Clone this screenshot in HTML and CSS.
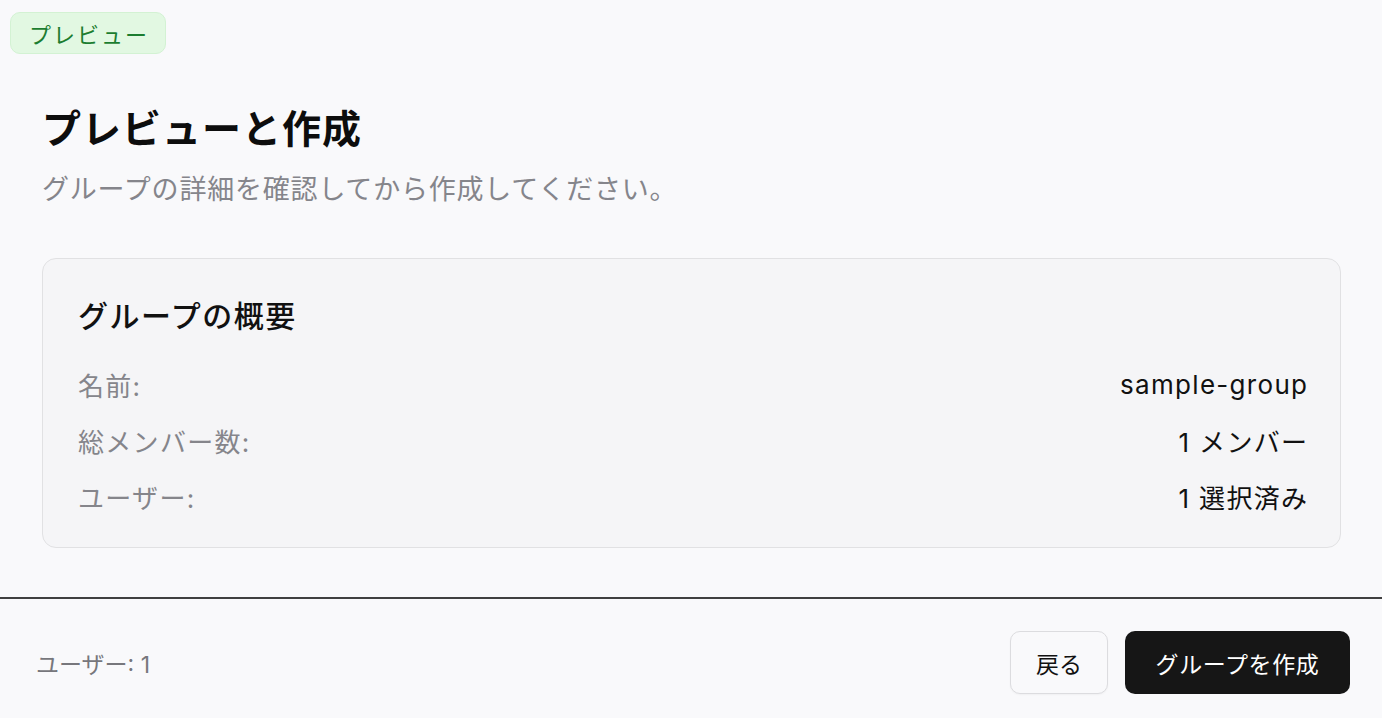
FILE: index.html
```html
<!DOCTYPE html>
<html lang="ja">
<head>
<meta charset="utf-8">
<title>プレビューと作成</title>
<link rel="stylesheet" href="styles.css">
</head>
<body>
<div class="page">
  <div class="content">
    <span class="badge">プレビュー</span>
    <section class="main">
      <h1 class="title">プレビューと作成</h1>
      <p class="subtitle">グループの詳細を確認してから作成してください。</p>
      <div class="card">
        <h2 class="card-title">グループの概要</h2>
        <div class="rows">
          <div class="row"><span class="label">名前:</span><span class="value">sample-group</span></div>
          <div class="row"><span class="label">総メンバー数:</span><span class="value">1 メンバー</span></div>
          <div class="row"><span class="label">ユーザー:</span><span class="value">1 選択済み</span></div>
        </div>
      </div>
    </section>
  </div>
  <footer class="footer">
    <span class="count">ユーザー: 1</span>
    <div class="actions">
      <button class="btn btn-secondary">戻る</button>
      <button class="btn btn-primary">グループを作成</button>
    </div>
  </footer>
</div>
</body>
</html>
```

FILE: styles.css
```css
* { box-sizing: border-box; }
html, body {
  margin: 0;
  padding: 0;
  background: #f9f9fb;
  font-family: "Inter", "Noto Sans CJK JP", sans-serif;
  color: #111;
}
.page {
  width: 1382px;
  height: 718px;
  display: flex;
  flex-direction: column;
  overflow: hidden;
}
.content {
  padding-top: 12px;
  display: flex;
  flex-direction: column;
  align-items: flex-start;
}
.badge {
  margin-left: 10px;
  height: 42px;
  padding: 0 16px 0 18px;
  display: inline-flex;
  align-items: center;
  background: #e2f8e2;
  border: 1px solid #d3f2d3;
  border-radius: 10px;
  color: #1c7d30;
  font-size: 22px;
  letter-spacing: 2px;
}
.main {
  align-self: stretch;
  padding: 0 41px 0 42px;
}
.title {
  margin: 51px 0 0 0;
  font-size: 39px;
  line-height: 48px;
  font-weight: 700;
  color: #0d0d0d;
  letter-spacing: 1px;
}
.subtitle {
  margin: 19px 0 0 0;
  font-size: 27px;
  line-height: 36px;
  color: #85858b;
  letter-spacing: 0.8px;
}
.card {
  margin-top: 50px;
  background: #f5f5f7;
  border: 1px solid #e1e1e3;
  border-radius: 14px;
  padding: 37px 33px 33px 35px;
}
.card-title {
  margin: 0;
  font-size: 30px;
  line-height: 40px;
  font-weight: 500;
  color: #111;
  letter-spacing: 1.5px;
}
.rows {
  margin-top: 30px;
  display: flex;
  flex-direction: column;
  gap: 20px;
}
.row {
  display: flex;
  justify-content: space-between;
  align-items: center;
  height: 36px;
  font-size: 26px;
  letter-spacing: 1.3px;
}
.label { color: #85858b; }
.value { color: #111; margin-right: -1.3px; }
.footer {
  margin-top: 49px;
  border-top: 2px solid #404040;
  padding: 32px 32px 0 36px;
  display: flex;
  justify-content: space-between;
  align-items: center;
}
.count {
  font-size: 23px;
  color: #77777c;
}
.actions {
  display: flex;
  gap: 17px;
  align-items: center;
}
.btn {
  font-family: "Inter", "Noto Sans CJK JP", sans-serif;
  font-size: 23px;
  height: 63px;
  border-radius: 10px;
  cursor: pointer;
}
.btn-secondary {
  width: 98px;
  background: #f9f9fb;
  border: 1px solid #dcdcdf;
  color: #111;
  box-shadow: 0 1px 2px rgba(0,0,0,0.04);
}
.btn-primary {
  width: 225px;
  background: #161616;
  border: none;
  color: #fff;
  letter-spacing: 0.6px;
}
```
